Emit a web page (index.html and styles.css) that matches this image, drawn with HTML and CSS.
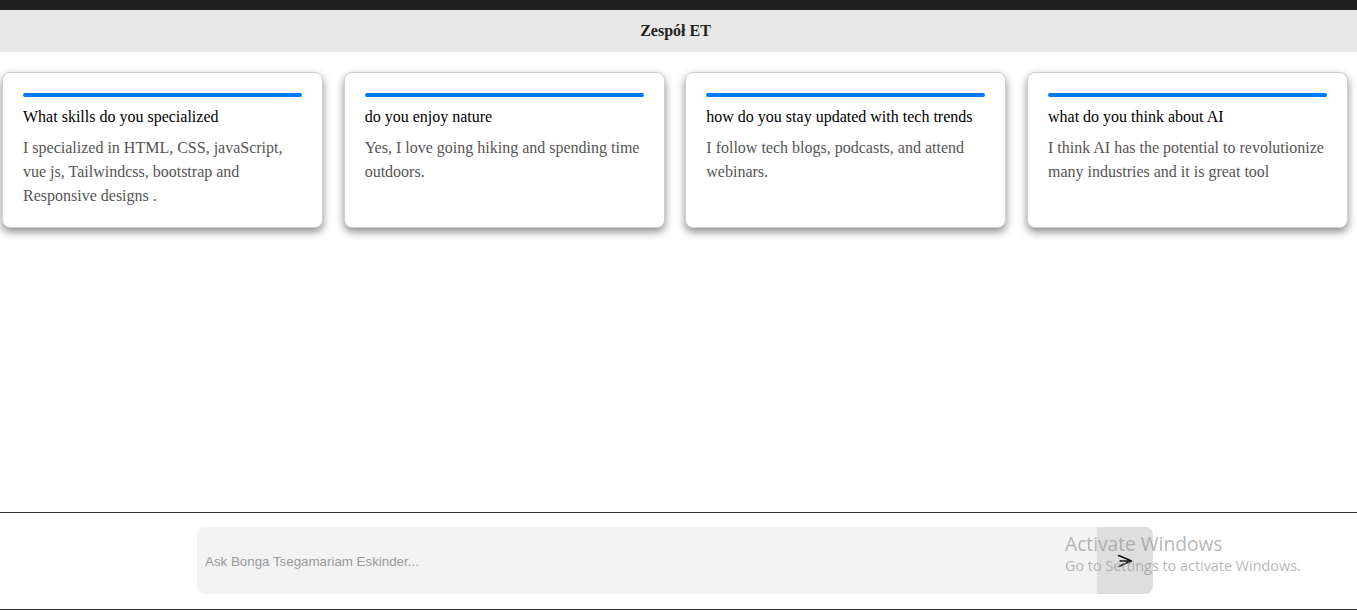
FILE: index.html
```
<!DOCTYPE html>
<html lang="pl">
<head>
<meta charset="utf-8">
<title>Zespół ET</title>
<link rel="stylesheet" href="styles.css">
</head>
<body>
<div class="topbar"></div>
<header class="header">Zespół ET</header>
<main class="cards">
  <div class="card">
    <div class="bar"></div>
    <h3 class="title">What skills do you specialized</h3>
    <p class="text">I specialized in HTML, CSS, javaScript, vue js, Tailwindcss, bootstrap and Responsive designs .</p>
  </div>
  <div class="card">
    <div class="bar"></div>
    <h3 class="title">do you enjoy nature</h3>
    <p class="text">Yes, I love going hiking and spending time outdoors.</p>
  </div>
  <div class="card">
    <div class="bar"></div>
    <h3 class="title">how do you stay updated with tech trends</h3>
    <p class="text">I follow tech blogs, podcasts, and attend webinars.</p>
  </div>
  <div class="card">
    <div class="bar"></div>
    <h3 class="title">what do you think about AI</h3>
    <p class="text">I think AI has the potential to revolutionize many industries and it is great tool</p>
  </div>
</main>
<footer class="footer">
  <div class="ask">
    <input class="ask-input" type="text" placeholder="Ask Bonga Tsegamariam Eskinder...">
    <button class="send" type="button" aria-label="send">
      <svg width="16" height="14" viewBox="0 0 16 14"><path d="M1.5 1.5 Q8 4 14.5 7 Q8 9.5 2 12.5 M3 7 L14 7" fill="none" stroke="#111" stroke-width="1.4" stroke-linecap="round" stroke-linejoin="round"/></svg>
    </button>
  </div>
</footer>
<div class="watermark">
  <div class="wm-title">Activate Windows</div>
  <div class="wm-sub">Go to Settings to activate Windows.</div>
</div>
</body>
</html>
```
FILE: styles.css
```
* { box-sizing: border-box; }
html, body { margin: 0; padding: 0; }
body {
  font-family: "Liberation Serif", "Times New Roman", serif;
  background: #fff;
  height: 610px;
  display: flex;
  flex-direction: column;
  overflow: hidden;
  position: relative;
}
.topbar { height: 10px; background: #202020; }
.header {
  height: 42px;
  background: #e8e8e8;
  display: flex;
  align-items: center;
  justify-content: center;
  font-weight: bold;
  font-size: 16px;
  color: #222;
  padding-right: 6px;
}
.cards {
  display: flex;
  gap: 20.6px;
  padding: 20px 9px 0 2px;
  flex: 1;
  align-items: flex-start;
}
.card {
  flex: 1;
  height: 156px;
  background: #fff;
  border: 1px solid #cfcfcf;
  border-radius: 8px;
  box-shadow: 0 4px 8px rgba(0,0,0,0.45);
  padding: 20px 20px 0 20px;
}
.bar { height: 4px; background: #007bff; border-radius: 2px; }
.title {
  margin: 10px 0 0;
  font-size: 16px;
  font-weight: normal;
  color: #000;
  line-height: 20px;
}
.text {
  margin: 9px 0 0;
  font-size: 16px;
  line-height: 24px;
  color: #555;
}
.footer {
  height: 98px;
  border-top: 1px solid #333;
  border-bottom: 1px solid #333;
  padding: 14px 0 0 197px;
}
.ask {
  width: 956px;
  height: 67px;
  display: flex;
  border-radius: 8px;
  background: #f3f3f3;
  overflow: hidden;
}
.ask-input {
  flex: 1;
  border: none;
  background: transparent;
  font-family: "Liberation Sans", Arial, sans-serif;
  font-size: 13.333px;
  padding: 2px 8px 0;
  outline: none;
  color: #333;
}
.ask-input::placeholder { color: #9a9a9a; }
.send {
  width: 56px;
  border: none;
  background: #dedede;
  display: flex;
  align-items: center;
  justify-content: center;
  padding: 0;
}
.watermark {
  position: absolute;
  left: 1065px;
  top: 532px;
  font-family: "Open Sans", "DejaVu Sans", sans-serif;
  color: rgba(150,150,150,0.7);
  pointer-events: none;
}
.wm-title { font-size: 19.2px; line-height: 23px; }
.wm-sub { font-size: 14.4px; line-height: 21px; }
```
